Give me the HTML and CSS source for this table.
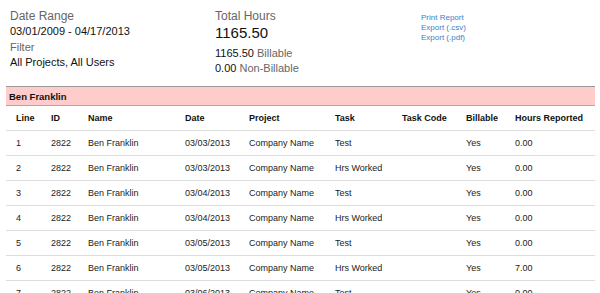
FILE: index.html
```html
<!DOCTYPE html>
<html>
<head>
<meta charset="utf-8">
<link rel="stylesheet" href="styles.css">
</head>
<body>
<div class="summary">
  <div class="col col-range">
    <div class="label">Date Range</div>
    <div class="value">03/01/2009 - 04/17/2013</div>
    <div class="label small filter">Filter</div>
    <div class="value last">All Projects, All Users</div>
  </div>
  <div class="col col-total">
    <div class="label">Total Hours</div>
    <div class="big">1165.50</div>
    <div class="value split">1165.50 <span class="muted">Billable</span></div>
    <div class="value">0.00 <span class="muted">Non-Billable</span></div>
  </div>
  <div class="col col-links">
    <a href="#" class="link">Print Report</a>
    <a href="#" class="link">Export (.csv)</a>
    <a href="#" class="link">Export (.pdf)</a>
  </div>
</div>
<table class="report">
  <colgroup>
    <col class="c-line"><col class="c-id"><col class="c-name"><col class="c-date"><col class="c-project"><col class="c-task"><col class="c-code"><col class="c-bill"><col class="c-hours">
  </colgroup>
  <thead>
    <tr class="user-row"><th colspan="9">Ben Franklin</th></tr>
    <tr class="head-row">
      <th>Line</th><th>ID</th><th>Name</th><th>Date</th><th>Project</th><th>Task</th><th>Task Code</th><th>Billable</th><th>Hours Reported</th>
    </tr>
  </thead>
  <tbody>
    <tr><td>1</td><td>2822</td><td>Ben Franklin</td><td>03/03/2013</td><td>Company Name</td><td>Test</td><td></td><td>Yes</td><td>0.00</td></tr>
    <tr><td>2</td><td>2822</td><td>Ben Franklin</td><td>03/03/2013</td><td>Company Name</td><td>Hrs Worked</td><td></td><td>Yes</td><td>0.00</td></tr>
    <tr><td>3</td><td>2822</td><td>Ben Franklin</td><td>03/04/2013</td><td>Company Name</td><td>Test</td><td></td><td>Yes</td><td>0.00</td></tr>
    <tr><td>4</td><td>2822</td><td>Ben Franklin</td><td>03/04/2013</td><td>Company Name</td><td>Hrs Worked</td><td></td><td>Yes</td><td>0.00</td></tr>
    <tr><td>5</td><td>2822</td><td>Ben Franklin</td><td>03/05/2013</td><td>Company Name</td><td>Test</td><td></td><td>Yes</td><td>0.00</td></tr>
    <tr><td>6</td><td>2822</td><td>Ben Franklin</td><td>03/05/2013</td><td>Company Name</td><td>Hrs Worked</td><td></td><td>Yes</td><td>7.00</td></tr>
    <tr><td>7</td><td>2822</td><td>Ben Franklin</td><td>03/06/2013</td><td>Company Name</td><td>Test</td><td></td><td>Yes</td><td>0.00</td></tr>
  </tbody>
</table>
</body>
</html>
```
FILE: styles.css
```css
html, body {
  margin: 0;
  padding: 0;
  background: #fff;
}
body {
  font-family: "Liberation Sans", Arial, sans-serif;
  color: #111;
  overflow: hidden;
}
.summary {
  display: flex;
  padding: 9px 0 0 10px;
  height: 77px;
  box-sizing: border-box;
}
.col-range { width: 205px; }
.col-total { width: 206px; }
.col-links {
  display: flex;
  flex-direction: column;
  padding-top: 4px;
}
.label {
  font-size: 12px;
  line-height: 15px;
  color: #666;
}
.label.small {
  font-size: 11px;
}
.filter { margin-top: 1px; }
.value {
  font-size: 11px;
  line-height: 15px;
  color: #111;
}
.value.last { line-height: 14px; }
.big {
  font-size: 15px;
  line-height: 18px;
  color: #111;
}
.split { margin-top: 4px; }
.muted { color: #666; }
.link {
  font-size: 8px;
  line-height: 10px;
  color: #3d7fc9;
  text-decoration: none;
}
.report {
  margin: 9px 0 0 6px;
  width: 589px;
  border-collapse: collapse;
  table-layout: fixed;
  font-size: 9px;
}
.c-line { width: 35px; }
.c-id { width: 37px; }
.c-name { width: 97px; }
.c-date { width: 64px; }
.c-project { width: 86px; }
.c-task { width: 67px; }
.c-code { width: 64px; }
.c-bill { width: 49px; }
.c-hours { width: 90px; }
.report th, .report td {
  padding: 0 0 0 10px;
  text-align: left;
  white-space: nowrap;
  overflow: hidden;
}
.user-row th {
  background: #ffcccc;
  border-top: 1px solid #999;
  border-bottom: 1px solid #aaa;
  height: 18px;
  padding-left: 3px;
  font-size: 9.5px;
  font-weight: bold;
  color: #111;
}
.head-row th {
  height: 24px;
  font-weight: bold;
  color: #111;
  border-bottom: 1px solid #ddd;
}
.report td {
  height: 24px;
  color: #222;
  border-bottom: 1px solid #ddd;
}
```
